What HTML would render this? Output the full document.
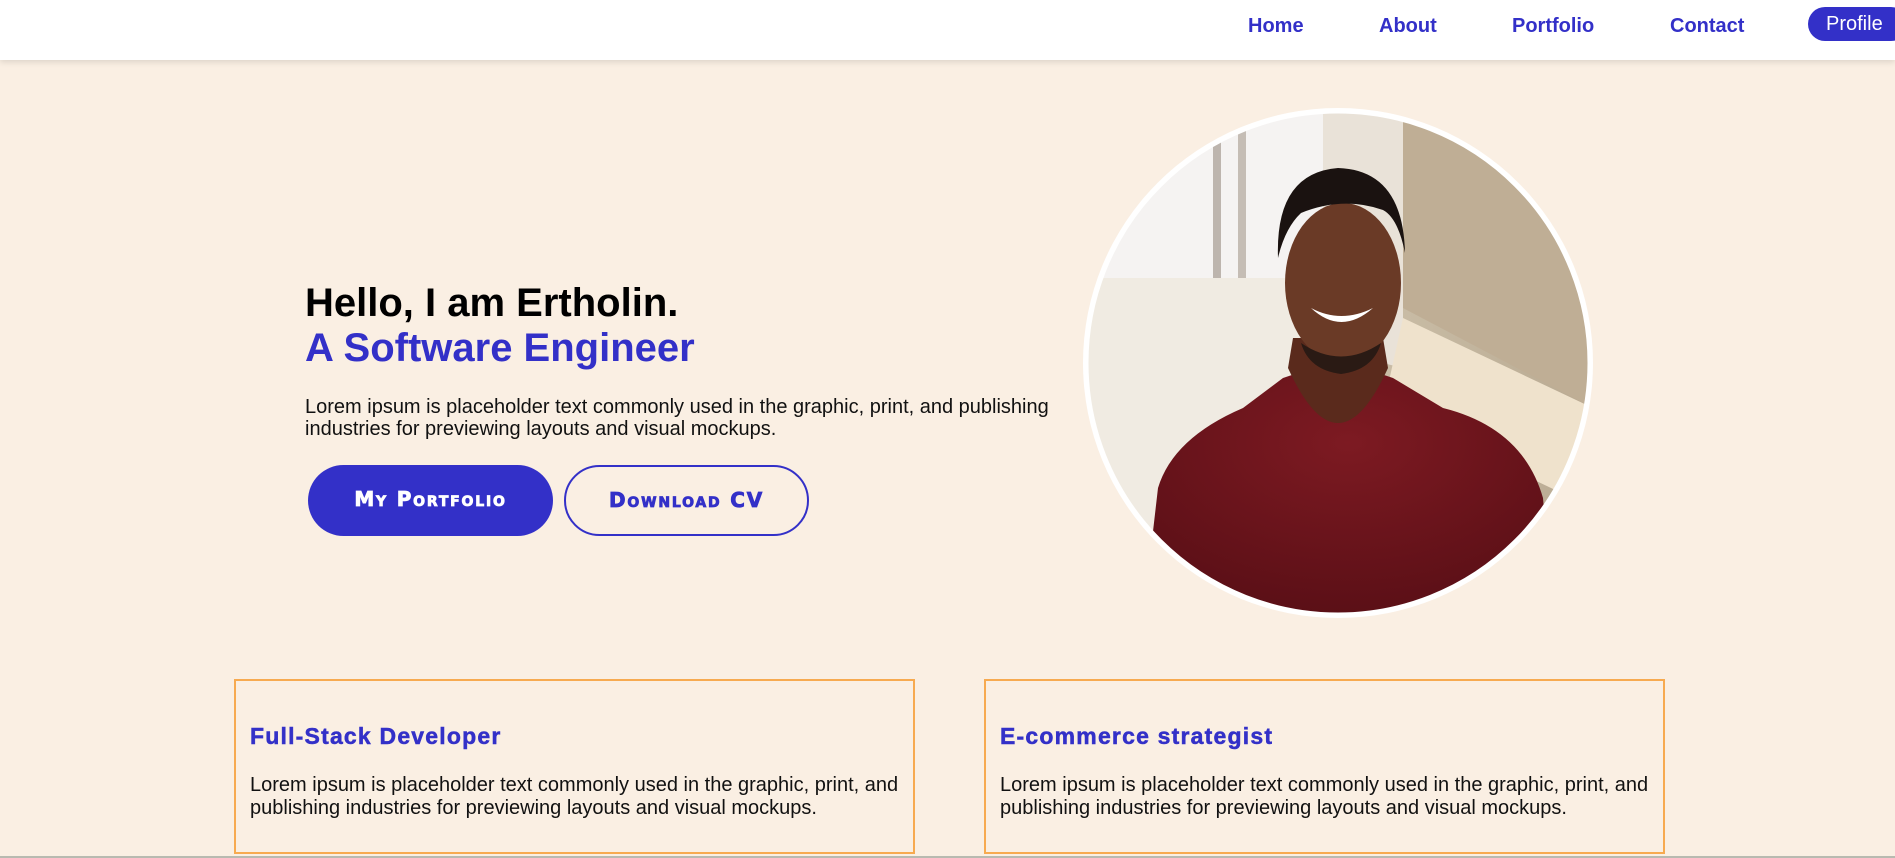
<!DOCTYPE html>
<html><head><meta charset="utf-8">
<style>
*{margin:0;padding:0;box-sizing:border-box}
html,body{width:1895px;height:858px;overflow:hidden}
body{background:#faefe3;font-family:"Liberation Sans",Arial,sans-serif;position:relative}
nav{position:absolute;left:0;top:0;width:1895px;height:60px;background:#fff;box-shadow:0 2px 6px rgba(0,0,0,.12)}
nav a{position:absolute;top:14px;font-size:20px;font-weight:bold;color:#3330c8;text-decoration:none;line-height:24px}
.pill{position:absolute;left:1808px;top:7px;width:100px;height:34px;border-radius:17px;background:#3330c8;color:#fff;font-size:20px;line-height:34px;padding-left:18px}
h1{position:absolute;left:305px;top:281px;font-size:40px;line-height:45px;font-weight:bold;color:#000;white-space:nowrap}
h1 span{color:#3330c8;display:block}
.p{position:absolute;left:305px;top:396px;width:800px;font-size:20px;line-height:22px;color:#111}
.btn{position:absolute;top:465px;width:245px;height:71px;border-radius:36px;font-weight:bold;font-variant:small-caps;font-size:20px;letter-spacing:1.8px;text-align:center;line-height:69px;font-family:"DejaVu Sans","Liberation Sans",sans-serif;-webkit-text-stroke:0.8px currentColor}
.b1{left:308px;background:#3330c8;color:#fff}
.b2{left:564px;border:2px solid #3330c8;color:#3330c8;line-height:67px}
.photo{position:absolute;left:1083px;top:108px;width:510px;height:510px;border-radius:50%;background:#fff}
.card{position:absolute;top:679px;width:681px;height:175px;border:2px solid #f7aa50}
.card h3{position:absolute;left:14px;top:42px;font-size:23px;font-weight:bold;color:#3330c8;letter-spacing:1.2px;-webkit-text-stroke:0.5px #3330c8}
.card p{position:absolute;left:14px;top:93px;width:665px;font-size:20px;line-height:23px;color:#111}
.bl{position:absolute;left:0;top:856px;width:1895px;height:2px;background:#b8bab0}
</style></head><body>
<nav>
<a style="left:1248px">Home</a>
<a style="left:1379px">About</a>
<a style="left:1512px">Portfolio</a>
<a style="left:1670px">Contact</a>
<div class="pill">Profile</div>
</nav>
<h1>Hello, I am Ertholin.<span>A Software Engineer</span></h1>
<div class="p">Lorem ipsum is placeholder text commonly used in the graphic, print, and publishing industries for previewing layouts and visual mockups.</div>
<div class="btn b1">My Portfolio</div>
<div class="btn b2">Download CV</div>
<div class="photo">
<svg width="510" height="510" viewBox="0 0 510 510">
<defs>
<clipPath id="c"><circle cx="255" cy="255" r="250"/></clipPath>
<linearGradient id="bg" x1="0" x2="1" y1="0" y2="0">
<stop offset="0" stop-color="#f1ede6"/><stop offset=".45" stop-color="#ede6da"/><stop offset=".55" stop-color="#cbbfa8"/><stop offset="1" stop-color="#b9aa92"/></linearGradient>
<radialGradient id="sh" cx=".5" cy=".3" r=".7"><stop offset="0" stop-color="#7d1a22"/><stop offset="1" stop-color="#5a0f16"/></radialGradient>
</defs>
<g clip-path="url(#c)">
<rect width="510" height="510" fill="url(#bg)"/>
<rect x="0" y="0" width="240" height="170" fill="#f5f3f2"/>
<rect x="130" y="30" width="8" height="140" fill="#bdb5ae"/>
<rect x="155" y="20" width="8" height="150" fill="#c5bdb5"/>
<polygon points="240,0 320,0 320,260 240,240" fill="#e9e2d8"/>
<polygon points="320,0 510,0 510,300 320,200" fill="#bfae95"/>
<polygon points="320,210 510,300 510,400 300,300" fill="#efe2cc"/>
<rect x="0" y="170" width="240" height="340" fill="#f0ebe2"/>
<path d="M60 510 L75 380 Q90 330 160 300 L200 270 Q255 250 310 270 L360 300 Q440 320 460 390 L470 510 Z" fill="url(#sh)"/>
<path d="M205 260 Q255 370 305 260 L300 230 L210 230 Z" fill="#5a2a1c"/>
<ellipse cx="260" cy="175" rx="58" ry="80" fill="#6a3a26"/>
<path d="M195 150 Q192 65 255 60 Q320 62 322 145 Q315 110 300 102 Q260 88 218 105 Q202 120 195 150 Z" fill="#1a1210"/>
<path d="M228 200 Q258 228 290 200 Q258 216 228 200 Z" fill="#fff"/>
<path d="M218 235 Q258 262 298 235 Q290 262 258 266 Q226 262 218 235 Z" fill="#2a1a14"/>
</g>
<circle cx="255" cy="255" r="252" fill="none" stroke="#fff" stroke-width="5"/>
</svg>
</div>
<div class="card" style="left:234px"><h3>Full-Stack Developer</h3><p>Lorem ipsum is placeholder text commonly used in the graphic, print, and publishing industries for previewing layouts and visual mockups.</p></div>
<div class="card" style="left:984px"><h3>E-commerce strategist</h3><p>Lorem ipsum is placeholder text commonly used in the graphic, print, and publishing industries for previewing layouts and visual mockups.</p></div>
<div class="bl"></div>
</body></html>
